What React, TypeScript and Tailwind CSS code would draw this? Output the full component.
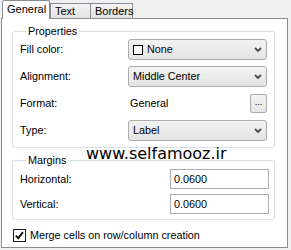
import React from "react";

const font = "font-['Liberation_Sans',Arial,sans-serif] text-[10.8px] text-black";

function Chevron() {
  return (
    <svg width="8" height="6" viewBox="0 0 8 6" className="shrink-0">
      <path d="M1 1 L4 4 L7 1" fill="none" stroke="#4a4a4a" strokeWidth="1.8" />
    </svg>
  );
}

function ComboBox({ children }: { children: React.ReactNode }) {
  return (
    <div className="flex h-[21px] w-[139px] items-center justify-between rounded-[3px] border border-[#acacac] bg-gradient-to-b from-[#f3f3f3] to-[#e4e4e4] pl-[4px] pr-[4px]">
      <div className="flex items-center gap-[4px]">{children}</div>
      <Chevron />
    </div>
  );
}

function Row({ label, children }: { label: string; children: React.ReactNode }) {
  return (
    <div className="flex h-[21px] items-center">
      <div className="w-[108px] shrink-0">{label}</div>
      {children}
    </div>
  );
}

export default function App() {
  return (
    <div className={`relative h-[250px] w-[291px] overflow-hidden bg-[#f0f0f0] ${font}`}>
      {/* tabs */}
      <div className="relative z-10 flex h-[19px] items-end pl-[2px]">
        <div className="flex h-[19px] w-[48px] items-center rounded-t-[2px] border-x border-t border-[#898c95] bg-white pl-[4px] pb-[1px] text-[11px]">
          General
        </div>
        <div className="flex h-[16px] w-[41px] items-center border border-[#898c95] bg-gradient-to-b from-[#f4f4f4] to-[#e3e3e3] pl-[4px] text-[11px]">
          Text
        </div>
        <div className="-ml-px flex h-[16px] w-[43px] items-center border border-[#898c95] bg-gradient-to-b from-[#f4f4f4] to-[#e3e3e3] pl-[4px] text-[11px]">
          Borders
        </div>
      </div>

      {/* panel */}
      <div className="-mt-px ml-[1px] flex h-[230px] w-[287px] flex-col border border-[#898c95] bg-white px-[10px]">
        <fieldset className="mt-[6px] w-[263px] rounded-[3px] border border-[#d5dfe5] pb-[6px] pl-[7px]">
          <legend className="ml-[6px] px-[2px] leading-[13px]">Properties</legend>
          <div className="flex flex-col gap-[6px] pt-[1px]">
            <Row label="Fill color:">
              <ComboBox>
                <div className="h-[10px] w-[10px] border border-black bg-white" />
                <span>None</span>
              </ComboBox>
            </Row>
            <Row label="Alignment:">
              <ComboBox>
                <span>Middle Center</span>
              </ComboBox>
            </Row>
            <Row label="Format:">
              <div className="flex w-[139px] items-center justify-between">
                <span className="pl-[2px]">General</span>
                <div className="flex h-[19px] w-[17px] items-center justify-center rounded-[2px] border border-[#acacac] bg-gradient-to-b from-[#f3f3f3] to-[#e4e4e4] pb-[3px] text-[9px] leading-none">
                  ...
                </div>
              </div>
            </Row>
            <Row label="Type:">
              <ComboBox>
                <span>Label</span>
              </ComboBox>
            </Row>
          </div>
        </fieldset>

        <fieldset className="mt-[6px] w-[263px] rounded-[3px] border border-[#d5dfe5] pb-[5px] pl-[7px]">
          <legend className="ml-[6px] px-[2px] leading-[13px]">Margins</legend>
          <div className="flex flex-col gap-[5px] pt-[2px]">
            {["Horizontal:", "Vertical:"].map((l) => (
              <div key={l} className="flex h-[20px] items-center">
                <div className="w-[150px] shrink-0">{l}</div>
                <div className="flex h-[20px] w-[99px] items-center border border-[#abadb3] bg-white pl-[3px]">
                  0.0600
                </div>
              </div>
            ))}
          </div>
        </fieldset>

        <div className="mt-[7px] flex items-center gap-[4px] pl-[1px]">
          <svg width="13" height="13" viewBox="0 0 13 13">
            <rect x="0.5" y="0.5" width="12" height="12" fill="#fff" stroke="#1e1e1e" />
            <path d="M2.8 6.6 L5.2 9.2 L10 3.2" fill="none" stroke="#111" strokeWidth="1.9" />
          </svg>
          <span>Merge cells on row/column creation</span>
        </div>
      </div>

      {/* watermark */}
      <div className="absolute left-[86px] top-[144px] font-['DejaVu_Sans',Verdana,sans-serif] text-[16px] leading-[20px] text-black">
        www.selfamooz.ir
      </div>
    </div>
  );
}
